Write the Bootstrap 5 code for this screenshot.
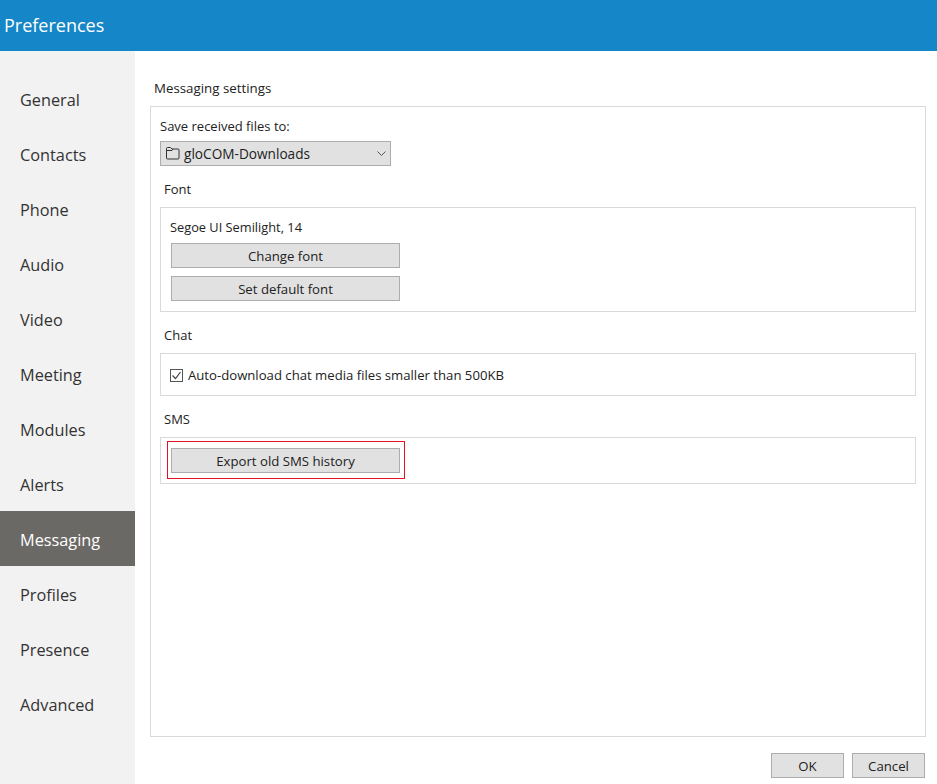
<!DOCTYPE html>
<html lang="en">
<head>
<meta charset="utf-8">
<title>Preferences</title>
<link href="https://cdn.jsdelivr.net/npm/bootstrap@5.3.0/dist/css/bootstrap.min.css" rel="stylesheet">
<style>
html,body{height:100%}
body{font-family:"Open Sans","Noto Sans",sans-serif;font-size:13px;color:#222;background:#fff;overflow:hidden}
.app-shell{height:784px}
.title-bar{height:51px;background:#1586c8;color:#fff;font-size:18px;padding-left:4px}
.side-nav{width:135px;background:#f2f2f2;padding-top:20px}
.side-item{height:55px;padding:4px 0 0 20px;font-size:16.3px;color:#333}
.side-item.is-active{background:#6b6965;color:#fff}
.content-pane{padding:0 11px 0 15px}
.pane-title{height:55px;padding:28px 0 0 4px;line-height:18px;font-size:13.3px}
.outer-box{height:631px;border:1px solid #d9d9d9;padding:4px 9px}
.box-label{line-height:18px}
.save-label{margin-top:6px}
.win-select{width:231px;height:25px;background:#e1e1e1;border:1px solid #adadad;padding:2px 4px 0 5px;margin-top:6px;font-size:13.65px}
.sect-label{padding-left:4px;line-height:18px;margin-top:14px}
.sect-box{border:1px solid #d9d9d9;padding:0 10px;margin-top:9px}
.font-box{padding-top:10px;padding-bottom:10px}
.font-name{font-size:12.8px;margin-left:-1px}
.chat-box{height:43px}
.chat-text{font-size:13.15px;margin-left:5px}
.sms-box{padding-top:3px;padding-bottom:4px}
.win-btn{display:block;width:229px;height:25px;line-height:23px;padding:1px 0 0;background:#e1e1e1;border:1px solid #adadad;border-radius:0;color:#222;font-size:13.2px}
.btn-first{margin-top:7px}
.btn-next{margin-top:8px}
.foot-btn{width:73px}
.red-frame{border:1px solid #e81123;padding:6px 3px 5px;margin-left:-4px;width:238px}
.win-check{width:13px;height:13px;border:1px solid #555;flex:none;margin-left:-1px;margin-top:1px}
.foot-row{padding:16px 1px 0 0}
.folder-icon{margin:-2px 4px 0 0;flex:none}
.chev-icon{margin-top:-2px}
</style>
</head>
<body>
<div class="app-shell d-flex flex-column">
  <div class="title-bar d-flex align-items-center">Preferences</div>
  <div class="d-flex flex-grow-1">
    <nav class="side-nav d-flex flex-column">
      <div class="side-item d-flex align-items-center">General</div>
      <div class="side-item d-flex align-items-center">Contacts</div>
      <div class="side-item d-flex align-items-center">Phone</div>
      <div class="side-item d-flex align-items-center">Audio</div>
      <div class="side-item d-flex align-items-center">Video</div>
      <div class="side-item d-flex align-items-center">Meeting</div>
      <div class="side-item d-flex align-items-center">Modules</div>
      <div class="side-item d-flex align-items-center">Alerts</div>
      <div class="side-item is-active d-flex align-items-center">Messaging</div>
      <div class="side-item d-flex align-items-center">Profiles</div>
      <div class="side-item d-flex align-items-center">Presence</div>
      <div class="side-item d-flex align-items-center">Advanced</div>
    </nav>
    <main class="content-pane flex-grow-1">
      <div class="pane-title">Messaging settings</div>
      <div class="outer-box">
        <div class="box-label save-label">Save received files to:</div>
        <div class="win-select d-flex align-items-center">
          <svg class="folder-icon" width="14" height="13" viewBox="0 0 14 13" fill="none" stroke="#333"><path d="M.5 11V1.500a1 1 0 0 1 1-1h3l1.500 1.500h6a1 1 0 0 1 1 1V11a1 1 0 0 1-1 1h-10.500a1 1 0 0 1-1-1zM.5 3.500h5.500l1-1.500"/></svg>
          <span class="flex-grow-1">gloCOM-Downloads</span>
          <svg class="chev-icon" width="9" height="5" viewBox="0 0 9 5" fill="none" stroke="#555"><path d="M.5.500l4 4 4-4"/></svg>
        </div>
        <div class="sect-label">Font</div>
        <div class="sect-box font-box">
          <div class="box-label font-name">Segoe UI Semilight, 14</div>
          <button type="button" class="btn win-btn btn-first">Change font</button>
          <button type="button" class="btn win-btn btn-next">Set default font</button>
        </div>
        <div class="sect-label">Chat</div>
        <div class="sect-box chat-box d-flex align-items-center">
          <span class="win-check d-flex align-items-center justify-content-center">
            <svg width="11" height="11" viewBox="0 0 11 11" fill="none" stroke="#444" stroke-width="1.2"><path d="M1.500 5.500l3 3 5-6.500"/></svg>
          </span>
          <span class="box-label chat-text">Auto-download chat media files smaller than 500KB</span>
        </div>
        <div class="sect-label">SMS</div>
        <div class="sect-box sms-box">
          <div class="red-frame">
            <button type="button" class="btn win-btn">Export old SMS history</button>
          </div>
        </div>
      </div>
      <div class="foot-row d-flex justify-content-end gap-2">
        <button type="button" class="btn win-btn foot-btn">OK</button>
        <button type="button" class="btn win-btn foot-btn">Cancel</button>
      </div>
    </main>
  </div>
</div>
<script src="https://cdn.jsdelivr.net/npm/bootstrap@5.3.0/dist/js/bootstrap.bundle.min.js"></script>
</body>
</html>
